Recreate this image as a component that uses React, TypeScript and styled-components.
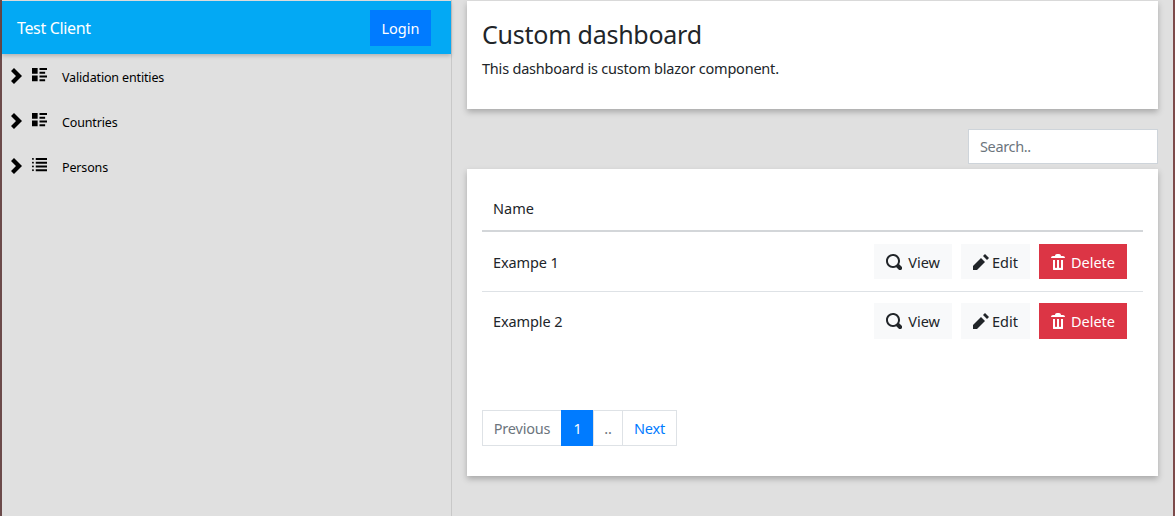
import React from 'react'
import styled, { createGlobalStyle } from 'styled-components'

const GlobalStyle = createGlobalStyle`
  html, body { margin: 0; padding: 0; height: 100%; }
  body {
    background: #e0e0e0;
    color: #212529;
    font-family: "Noto Sans", "Open Sans", sans-serif;
    font-size: 14.5px;
    overflow: hidden;
  }
  #root { height: 100%; }
`

const ICONS = {
  chevron: 'M1.5 0l-1.5 1.5 2.5 2.5-2.5 2.5 1.5 1.5 4-4-4-4z',
  listRich: 'M0 0v3h3v-3h-3zm4 0v1h4v-1h-4zm0 2v1h3v-1h-3zm-4 2v3h3v-3h-3zm4 0v1h4v-1h-4zm0 2v1h3v-1h-3z',
  list: 'M.5 0c-.28 0-.5.22-.5.5s.22.5.5.5.5-.22.5-.5-.22-.5-.5-.5zm1.5 0v1h6v-1h-6zm-1.5 2c-.28 0-.5.22-.5.5s.22.5.5.5.5-.22.5-.5-.22-.5-.5-.5zm1.5 0v1h6v-1h-6zm-1.5 2c-.28 0-.5.22-.5.5s.22.5.5.5.5-.22.5-.5-.22-.5-.5-.5zm1.5 0v1h6v-1h-6zm-1.5 2c-.28 0-.5.22-.5.5s.22.5.5.5.5-.22.5-.5-.22-.5-.5-.5zm1.5 0v1h6v-1h-6z',
  search: 'M3.5 0c-1.93 0-3.5 1.57-3.5 3.5s1.57 3.5 3.5 3.5c.59 0 1.17-.14 1.66-.41a1 1 0 0 0 .13.13l1 1a1.02 1.02 0 1 0 1.44-1.44l-1-1a1 1 0 0 0-.16-.13c.27-.49.44-1.06.44-1.66 0-1.93-1.57-3.5-3.5-3.5zm0 1c1.39 0 2.5 1.11 2.5 2.5 0 .66-.24 1.27-.66 1.72-.01.01-.02.02-.03.03a1 1 0 0 0-.13.13c-.44.4-1.04.63-1.69.63-1.39 0-2.5-1.11-2.5-2.5s1.11-2.5 2.5-2.5z',
  pencil: 'M6 0l-1 1 2 2 1-1-2-2zm-2 2l-4 4v2h2l4-4-2-2z',
  trash: 'M3 0c-.55 0-1 .45-1 1h-1c-.55 0-1 .45-1 1h7c0-.55-.45-1-1-1h-1c0-.55-.45-1-1-1h-1zm-2 3v4.81c0 .11.08.19.19.19h4.63c.11 0 .19-.08.19-.19v-4.81h-1v3.5c0 .28-.22.5-.5.5s-.5-.22-.5-.5v-3.5h-1v3.5c0 .28-.22.5-.5.5s-.5-.22-.5-.5v-3.5h-1z',
}

function Icon({ name, size }: { name: keyof typeof ICONS; size: number }) {
  return (
    <svg width={size} height={size} viewBox="0 0 8 8" fill="currentColor">
      <path d={ICONS[name]} />
    </svg>
  )
}

const Page = styled.div`
  display: flex;
  height: 100%;
  border-left: 2px solid #6b4a4a;
  border-right: 2px solid #7d4a4a;
  box-sizing: border-box;
`

const Sidebar = styled.aside`
  width: 450px;
  flex: none;
  border-right: 1px solid #c8c8c8;
  padding-top: 1px;
  box-sizing: border-box;
`

const TopBar = styled.header`
  height: 53px;
  background: #03a9f4;
  display: flex;
  align-items: center;
  justify-content: space-between;
  padding: 0 20px 0 15px;
  box-shadow: 0 2px 4px rgba(0, 0, 0, 0.2);
  color: #fff;
`

const Brand = styled.span`
  font-size: 16px;
  letter-spacing: -0.35px;
`

const LoginButton = styled.button`
  width: 61px;
  height: 36px;
  border: 0;
  background: #007bff;
  color: #fff;
  font: inherit;
  padding: 0;
`

const NavList = styled.nav`
  padding-top: 1px;
`

const NavRow = styled.div`
  height: 45px;
  display: flex;
  align-items: flex-start;
  padding: 13px 0 0 9px;
  box-sizing: border-box;
  color: #000;
`

const Chevron = styled.span`
  display: flex;
  width: 21px;
`

const NavIcon = styled.span`
  display: flex;
  width: 30px;
`

const NavLabel = styled.span`
  font-size: 12.5px;
  line-height: 17px;
  margin-top: 1px;
  letter-spacing: -0.15px;
`

const Main = styled.main`
  flex: 1;
  padding: 0 15px;
  min-width: 0;
`

const Card = styled.section`
  background: #fff;
  box-shadow: 0 3px 6px rgba(0, 0, 0, 0.25);
`

const Intro = styled(Card)`
  height: 108px;
  margin-top: 1px;
  padding: 17px 15px 0;
  box-sizing: border-box;
`

const Title = styled.h1`
  margin: 0 0 7px;
  font-size: 25px;
  font-weight: 400;
  line-height: 32px;
  letter-spacing: -0.25px;
`

const Lead = styled.p`
  margin: 0;
  line-height: 22px;
  letter-spacing: -0.21px;
`

const SearchRow = styled.div`
  display: flex;
  justify-content: flex-end;
  margin-top: 20px;
  margin-bottom: 5px;
`

const SearchInput = styled.input`
  width: 190px;
  height: 35px;
  box-sizing: border-box;
  border: 1px solid #ced4da;
  background: #fff;
  padding: 0 11px 2px;
  font: inherit;
  letter-spacing: -0.35px;
  &::placeholder { color: #6c757d; opacity: 1; }
`

const TableCard = styled(Card)`
  height: 307px;
  padding: 15px;
  box-sizing: border-box;
`

const Table = styled.div`
  display: flex;
  flex-direction: column;
`

const HeaderRow = styled.div`
  height: 48px;
  display: flex;
  align-items: center;
  padding: 2px 11px 0;
  border-bottom: 2px solid #d3d6d9;
  box-sizing: border-box;
`

const Row = styled.div`
  height: 60px;
  display: flex;
  align-items: center;
  justify-content: space-between;
  padding: 12px 16px 12px 11px;
  border-bottom: 1px solid #dee2e6;
  box-sizing: border-box;
  &:last-child {
    height: 58px;
    padding-top: 11px;
    padding-bottom: 11px;
    border-bottom: 0;
  }
`

const RowName = styled.span`
  letter-spacing: -0.1px;
`

const Actions = styled.div`
  display: flex;
  align-self: stretch;
  gap: 9px;
`

const ActionButton = styled.button<{ $danger?: boolean; $gap: number }>`
  display: flex;
  align-items: center;
  gap: ${p => p.$gap}px;
  padding: 0 12px;
  border: 0;
  font: inherit;
  background: ${p => (p.$danger ? '#dc3545' : '#f8f9fa')};
  color: ${p => (p.$danger ? '#fff' : '#212529')};
`

const Pager = styled.div`
  display: flex;
  margin-top: 60px;
  height: 36px;
`

const PageItem = styled.span<{ $active?: boolean; $muted?: boolean; $width: number }>`
  display: flex;
  align-items: center;
  justify-content: center;
  box-sizing: border-box;
  width: ${p => p.$width}px;
  margin-left: -1px;
  letter-spacing: -0.2px;
  border: 1px solid ${p => (p.$active ? '#007bff' : '#dee2e6')};
  background: ${p => (p.$active ? '#007bff' : '#fff')};
  color: ${p => (p.$active ? '#fff' : p.$muted ? '#6c757d' : '#007bff')};
  &:first-child { margin-left: 0; }
`

const navItems: { label: string; icon: keyof typeof ICONS }[] = [
  { label: 'Validation entities', icon: 'listRich' },
  { label: 'Countries', icon: 'listRich' },
  { label: 'Persons', icon: 'list' },
]

export default function App() {
  return (
    <Page>
      <GlobalStyle />
      <Sidebar>
        <TopBar>
          <Brand>Test Client</Brand>
          <LoginButton>Login</LoginButton>
        </TopBar>
        <NavList>
          {navItems.map(item => (
            <NavRow key={item.label}>
              <Chevron><Icon name="chevron" size={16} /></Chevron>
              <NavIcon><Icon name={item.icon} size={15} /></NavIcon>
              <NavLabel>{item.label}</NavLabel>
            </NavRow>
          ))}
        </NavList>
      </Sidebar>
      <Main>
        <Intro>
          <Title>Custom dashboard</Title>
          <Lead>This dashboard is custom blazor component.</Lead>
        </Intro>
        <SearchRow>
          <SearchInput placeholder="Search.." />
        </SearchRow>
        <TableCard>
          <Table>
            <HeaderRow>Name</HeaderRow>
            {['Exampe 1', 'Example 2'].map(name => (
              <Row key={name}>
                <RowName>{name}</RowName>
                <Actions>
                  <ActionButton $gap={6}><Icon name="search" size={16} />View</ActionButton>
                  <ActionButton $gap={3}><Icon name="pencil" size={16} />Edit</ActionButton>
                  <ActionButton $danger $gap={4}><Icon name="trash" size={16} />Delete</ActionButton>
                </Actions>
              </Row>
            ))}
          </Table>
          <Pager>
            <PageItem $muted $width={80}>Previous</PageItem>
            <PageItem $active $width={33}>1</PageItem>
            <PageItem $muted $width={30}>..</PageItem>
            <PageItem $width={55}>Next</PageItem>
          </Pager>
        </TableCard>
      </Main>
    </Page>
  )
}
